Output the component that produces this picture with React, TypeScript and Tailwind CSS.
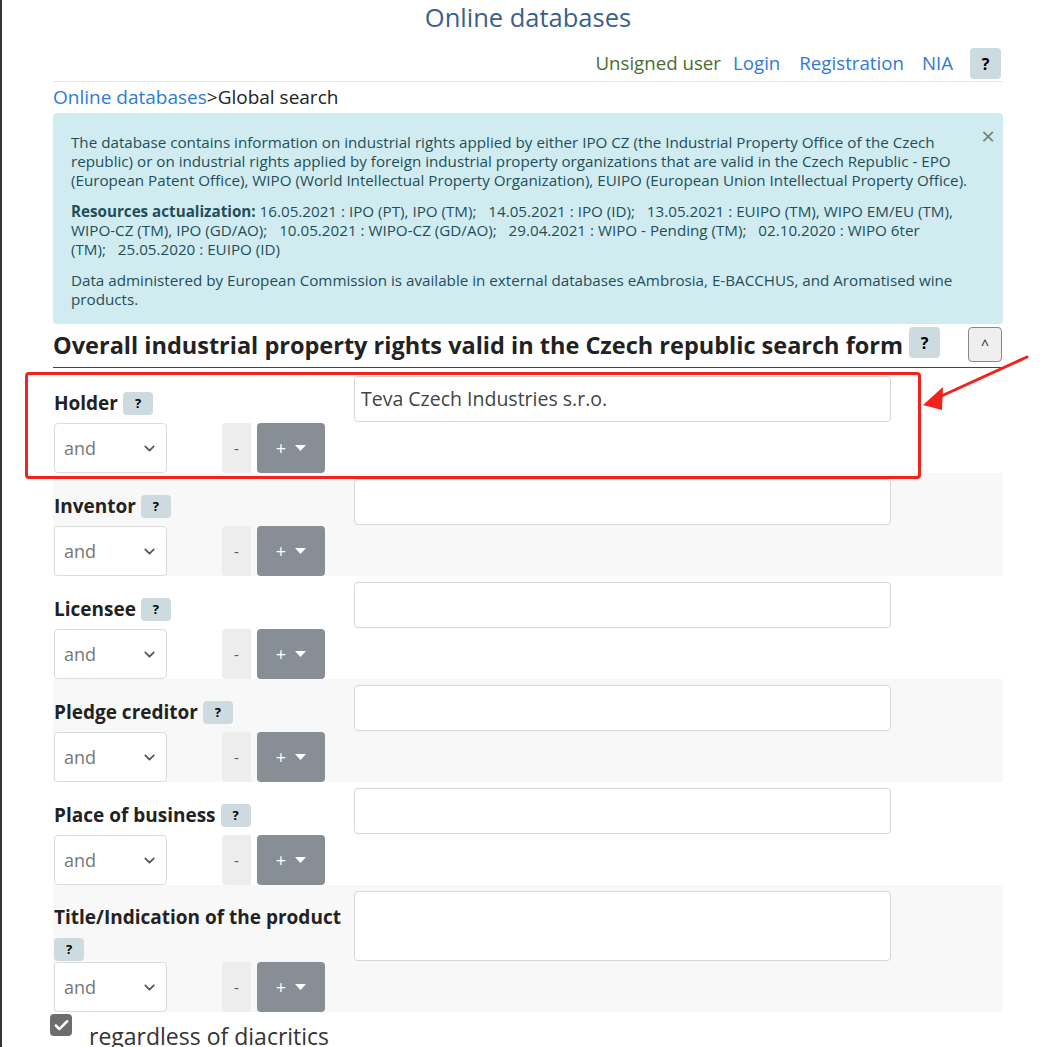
import { ChevronDown, Check } from "lucide-react";

const FONT = { fontFamily: '"Open Sans", "Noto Sans", sans-serif' };

const rows = [
  { label: "Holder", value: "Teva Czech Industries s.r.o.", gray: false },
  { label: "Inventor", value: "", gray: true },
  { label: "Licensee", value: "", gray: false },
  { label: "Pledge creditor", value: "", gray: true },
  { label: "Place of business", value: "", gray: false },
];

function Help({ small }: { small?: boolean }) {
  return (
    <span
      className={
        "inline-flex items-center justify-center rounded bg-[#cddbe0] font-bold text-black " +
        (small ? "h-[23px] w-[30px] text-[13px]" : "h-[31px] w-[31px] text-[16px]")
      }
    >
      ?
    </span>
  );
}

function Controls() {
  return (
    <div className="flex h-[50px] items-stretch">
      <div className="flex w-[113px] items-center justify-between rounded border border-[#dcdcdc] bg-white pl-[9px] pr-[8px] text-[18px] text-[#777]">
        <span>and</span>
        <ChevronDown size={17} strokeWidth={2.4} className="text-[#555]" />
      </div>
      <div className="ml-[55px] flex w-[29px] items-center justify-center rounded-l bg-[#ededed] text-[15px] text-[#555]">-</div>
      <div className="ml-[6px] flex w-[68px] items-center justify-center gap-[9px] rounded bg-[#878e95] text-white">
        <span className="text-[18px] leading-none">+</span>
        <svg width="11" height="6" viewBox="0 0 11 6"><path d="M0 0h11L5.5 6z" fill="white" /></svg>
      </div>
    </div>
  );
}

function Row({ label, value, gray, tall }: { label: string; value: string; gray: boolean; tall?: boolean }) {
  return (
    <div className={"flex " + (gray ? "bg-[#f8f8f8]" : "bg-white")}>
      <div className="w-[301px] pl-[1px]">
        {tall ? (
          <div className="pt-[19px]">
            <div className="text-[19px] font-bold leading-[26px] text-[#222]">{label}</div>
            <div className="mt-[8px] mb-[1px] flex leading-none"><Help small /></div>
          </div>
        ) : (
          <div className="flex h-[53px] items-center gap-[5px] pt-[12px]">
            <span className="text-[19px] font-bold leading-[26px] text-[#222]">{label}</span>
            <span className="mt-[2px] flex"><Help small /></span>
          </div>
        )}
        <Controls />
      </div>
      <div className="pt-[6px]">
        <div
          className={
            "w-[537px] rounded border border-[#d7d7d7] bg-white px-[6px] text-[19.5px] text-[#444] " +
            (tall ? "h-[70px]" : "h-[46px] leading-[44px]")
          }
        >
          {value}
        </div>
      </div>
    </div>
  );
}

export default function App() {
  return (
    <div className="relative min-h-[1047px] bg-white" style={FONT}>
      <div className="absolute left-0 top-0 h-full w-[2px] bg-[#333]" />
      <div className="relative mx-auto w-[950px]">
        <div className="pt-[1px] text-center text-[25.5px] leading-[32px] text-[#3d5f8c]">Online databases</div>
        <div className="mt-[15px] flex items-center justify-end border-b border-[#e6e6e6] pb-[2px] text-[18.7px]">
          <span className="text-[#4c6b2e]">Unsigned user</span>
          <span className="ml-[12px] text-[#2f7ad6]">Login</span>
          <span className="ml-[19px] text-[#2f7ad6]">Registration</span>
          <span className="ml-[18px] text-[#2f7ad6]">NIA</span>
          <span className="ml-[17px] mr-[2px] flex"><Help /></span>
        </div>
        <div className="mt-[3px] text-[19px] leading-[25px] text-[#222]">
          <span className="text-[#2f7ad6]">Online databases</span>&gt;Global search
        </div>
        <div className="relative mt-[3px] rounded bg-[#d1ecf1] pb-[15px] pl-[18px] pr-[30px] pt-[20px] text-[15.2px] leading-[19px] text-[#1f4e59]">
          <span className="absolute right-[8px] top-[11px] text-[24px] leading-none text-[#6b7f84]">×</span>
          <p>
            The database contains information on industrial rights applied by either IPO CZ (the Industrial Property Office of the Czech republic) or on industrial rights applied by foreign industrial property organizations that are valid in the Czech Republic - EPO (European Patent Office), WIPO (World Intellectual Property Organization), EUIPO (European Union Intellectual Property Office).
          </p>
          <p className="mr-[16px] mt-[12px]">
            <b>Resources actualization:</b> 16.05.2021 : IPO (PT), IPO (TM);&nbsp;&nbsp; 14.05.2021 : IPO (ID);&nbsp;&nbsp; 13.05.2021 : EUIPO (TM), WIPO EM/EU (TM), WIPO-CZ (TM), IPO (GD/AO);&nbsp;&nbsp; 10.05.2021 : WIPO-CZ (GD/AO);&nbsp;&nbsp; 29.04.2021 : WIPO - Pending (TM);&nbsp;&nbsp; 02.10.2020 : WIPO 6ter (TM);&nbsp;&nbsp; 25.05.2020 : EUIPO (ID)
          </p>
          <p className="mt-[12px]">
            Data administered by European Commission is available in external databases eAmbrosia, E-BACCHUS, and Aromatised wine products.
          </p>
        </div>
        <div className="flex h-[44px] items-center border-b border-[#444]">
          <h2 className="text-[23.5px] font-bold text-[#222]">Overall industrial property rights valid in the Czech republic search form</h2>
          <span className="ml-[6px] mb-[6px] flex"><Help /></span>
          <span className="ml-auto mr-[1px] mb-[3px] flex h-[35px] w-[34px] items-center justify-center rounded border border-[#888] bg-[#efefef] text-[14px] text-[#222]">^</span>
        </div>
        <div className="pt-[2px]">
          {rows.map((r) => (
            <Row key={r.label} label={r.label} value={r.value} gray={r.gray} />
          ))}
          <Row label="Title/Indication of the product" value="" gray tall />
        </div>
        <div className="ml-[-3px] mt-[2px] flex items-start gap-[17px]">
          <span className="flex h-[22px] w-[22px] items-center justify-center rounded bg-[#6d6d6d]">
            <Check size={17} strokeWidth={3.5} className="text-white" />
          </span>
          <span className="mt-[7px] text-[23px] leading-[30px] text-[#333]">regardless of diacritics</span>
        </div>

        <div className="pointer-events-none absolute left-[-28px] top-[372px] h-[107px] w-[896px] rounded-[4px] border-[3px] border-[#f2221c]" />
        <svg className="pointer-events-none absolute left-[860px] top-[350px]" width="120" height="70" viewBox="0 0 120 70">
          <path d="M114 7 L24 48" stroke="#f2221c" strokeWidth="3" strokeLinecap="round" />
          <path d="M10 55 L30 37 L29 60 Z" fill="#f2221c" />
        </svg>
      </div>
    </div>
  );
}
